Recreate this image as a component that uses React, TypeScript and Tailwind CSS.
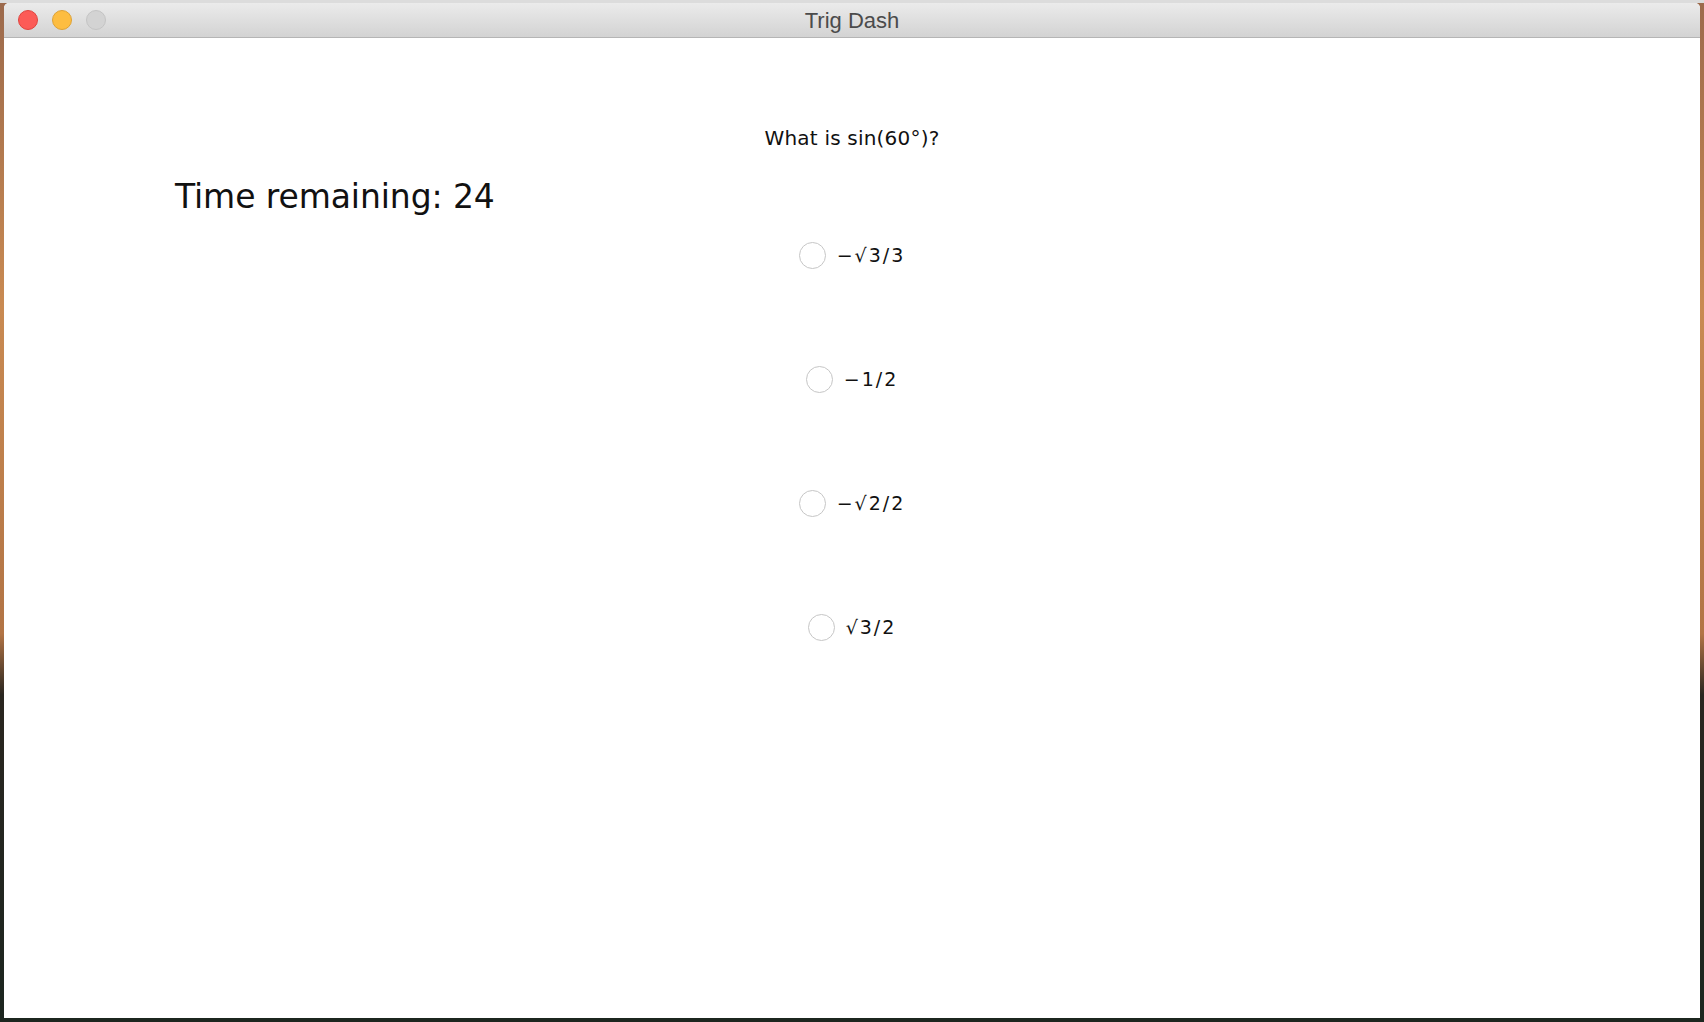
import { useState } from "react";

const options = [
  { id: 1, label: "−√3/3" },
  { id: 2, label: "−1/2" },
  { id: 3, label: "−√2/2" },
  { id: 4, label: "√3/2" },
];

export default function App() {
  const [picked, setPicked] = useState<number | null>(null);

  return (
    <div className="h-screen w-full overflow-hidden bg-[linear-gradient(to_bottom,#dcdcdc_0px,#dcdcdc_3px,#9c6a4c_3px,#c98a52_30%,#b27445_62%,#2a2620_68%,#1c261f_100%)] pl-[4px] pr-[4px] pt-[3px] pb-[4px]">
      <div className="flex h-full w-full flex-col overflow-hidden rounded-t-[5px] bg-white">
        {/* Title bar */}
        <div className="relative flex h-[35px] shrink-0 items-center border-b border-[#b5b5b5] bg-gradient-to-b from-[#ebebeb] to-[#d3d3d3] pl-[14px]">
          <div className="flex items-center gap-[14px]">
            <span className="h-[20px] w-[20px] rounded-full border border-[#e0443e] bg-[#fc5b57]" />
            <span className="h-[20px] w-[20px] rounded-full border border-[#dea236] bg-[#fdbd41]" />
            <span className="h-[20px] w-[20px] rounded-full border border-[#c4c4c4] bg-[#d3d3d3]" />
          </div>
          <div className="absolute inset-0 flex items-center justify-center font-['Liberation_Sans',sans-serif] text-[22px] text-[#4b4b4b]">
            Trig Dash
          </div>
        </div>

        {/* Content */}
        <div className="flex flex-1 flex-col font-['DejaVu_Sans',sans-serif] text-[#111]">
          <div className="mt-[88px] text-center text-[20px] leading-[24px] tracking-[0.2px]">
            What is sin(60°)?
          </div>

          <div className="mt-[27px] pl-[171px] text-[33px] leading-[40px] tracking-[-0.1px]">
            Time remaining: 24
          </div>

          <div className="mt-[23px] flex flex-col items-center gap-[94px]">
            {options.map((o) => (
              <label
                key={o.id}
                onClick={() => setPicked(o.id)}
                className="flex h-[30px] cursor-pointer items-center gap-[10px]"
              >
                <span className="flex h-[27px] w-[27px] items-center justify-center rounded-full border-[1.5px] border-[#c6c6c6] bg-white">
                  {picked === o.id && (
                    <span className="h-[10px] w-[10px] rounded-full bg-[#3a8ef6]" />
                  )}
                </span>
                <span className="pl-[1px] text-[19px] leading-[24px] tracking-[2px]">
                  {o.label}
                </span>
              </label>
            ))}
          </div>
        </div>
      </div>
    </div>
  );
}
